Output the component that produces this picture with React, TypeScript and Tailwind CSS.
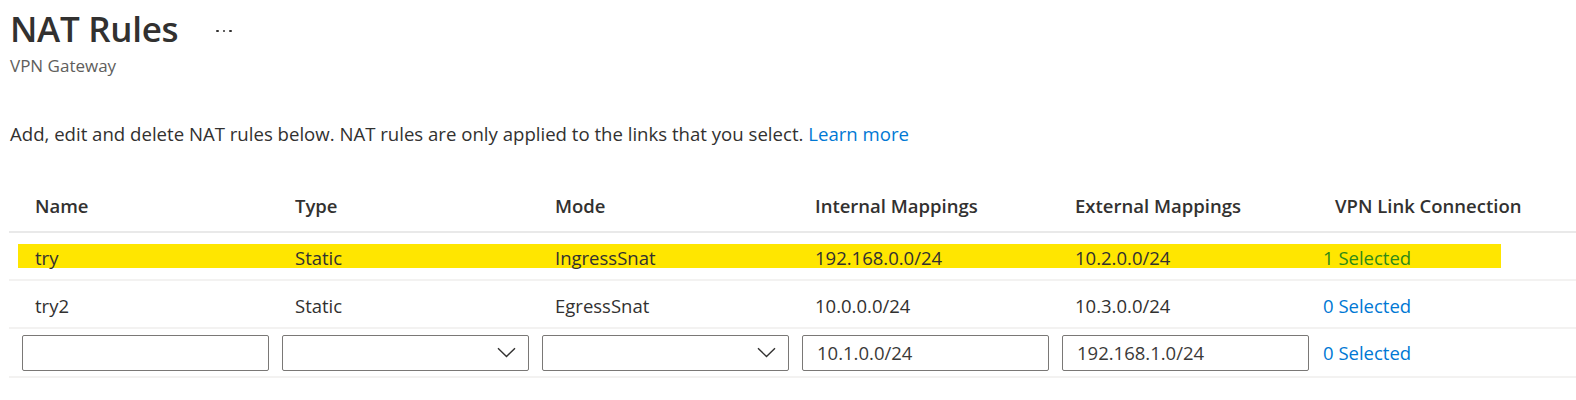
import * as React from 'react';

const FONT = { fontFamily: '"Open Sans", "Noto Sans", Arial, sans-serif' };

type Rule = { name: string; type: string; mode: string; internal: string; external: string; links: number };

const rules: Rule[] = [
    { name: 'try', type: 'Static', mode: 'IngressSnat', internal: '192.168.0.0/24', external: '10.2.0.0/24', links: 1 },
    { name: 'try2', type: 'Static', mode: 'EgressSnat', internal: '10.0.0.0/24', external: '10.3.0.0/24', links: 0 },
];

const cols = 'grid grid-cols-[247px_247px_247px_247px_247px_1fr] gap-x-[13px] items-center';

function Chevron() {
    return (
        <svg width="19" height="11" viewBox="0 0 19 11" fill="none" className="shrink-0">
            <path d="M1 1.2L9.5 9.5L18 1.2" stroke="#323130" strokeWidth="1.4" />
        </svg>
    );
}

function TextBox({ value }: { value?: string }) {
    return (
        <div className="h-[36px] border border-[#7a7876] rounded-[2px] flex items-center px-[14px] text-[#3b3a39]">
            {value}
        </div>
    );
}

function SelectBox() {
    return (
        <div className="h-[36px] border border-[#7a7876] rounded-[2px] flex items-center justify-end pr-[12px]">
            <Chevron />
        </div>
    );
}

export default function App() {
    return (
        <div style={FONT} className="w-full h-[400px] bg-white text-[#323130] overflow-hidden">
            {/* Page header */}
            <div className="pl-[10px] pt-[7px]">
                <div className="flex items-center">
                    <h1 className="text-[35px] leading-[44px] font-semibold tracking-[-0.3px]">NAT Rules</h1>
                    <div className="ml-[38px] mt-[4px] flex gap-[4px]">
                        <span className="w-[2.5px] h-[2.5px] rounded-full bg-[#323130]"></span>
                        <span className="w-[2.5px] h-[2.5px] rounded-full bg-[#323130]"></span>
                        <span className="w-[2.5px] h-[2.5px] rounded-full bg-[#323130]"></span>
                    </div>
                </div>
                <p className="mt-[4px] text-[17px] leading-[22px] text-[#605e5c]">VPN Gateway</p>
            </div>

            <p className="pl-[10px] mt-[44px] text-[18.6px] leading-[26px]">
                Add, edit and delete NAT rules below. NAT rules are only applied to the links that you select.{' '}
                <span className="text-[#0078d4]">Learn more</span>
            </p>

            {/* Rules table */}
            <div className="ml-[9px] mt-[33px] text-[18.5px]">
                <div className={`${cols} h-[53px] pl-[13px] border-b-2 border-[#e9e9e9] font-semibold`}>
                    <span className="pl-[13px]">Name</span>
                    <span className="pl-[13px]">Type</span>
                    <span className="pl-[13px]">Mode</span>
                    <span className="pl-[13px]">Internal Mappings</span>
                    <span className="pl-[13px]">External Mappings</span>
                    <span className="pl-[13px]">VPN Link Connection</span>
                </div>

                {rules.map((r, i) => (
                    <div key={r.name} className="h-[48px] border-b-2 border-[#f3f2f1] flex items-center">
                        <div className={`${cols} h-[24px] w-[1483px] ml-[9px] pl-[4px] ${i === 0 ? 'bg-[#ffe600]' : ''}`}>
                            <span className="pl-[13px]">{r.name}</span>
                            <span className="pl-[13px]">{r.type}</span>
                            <span className="pl-[13px]">{r.mode}</span>
                            <span className="pl-[13px]">{r.internal}</span>
                            <span className="pl-[13px]">{r.external}</span>
                            <span className={`pl-[1px] ${i === 0 ? 'text-[#2f8a17]' : 'text-[#0078d4]'}`}>{r.links} Selected</span>
                        </div>
                    </div>
                ))}

                {/* New rule row */}
                <div className={`${cols} h-[49px] pl-[13px] border-b-2 border-[#f3f2f1]`}>
                    <TextBox />
                    <SelectBox />
                    <SelectBox />
                    <TextBox value="10.1.0.0/24" />
                    <TextBox value="192.168.1.0/24" />
                    <span className="pl-[1px] text-[#0078d4]">0 Selected</span>
                </div>
            </div>
        </div>
    );
}
